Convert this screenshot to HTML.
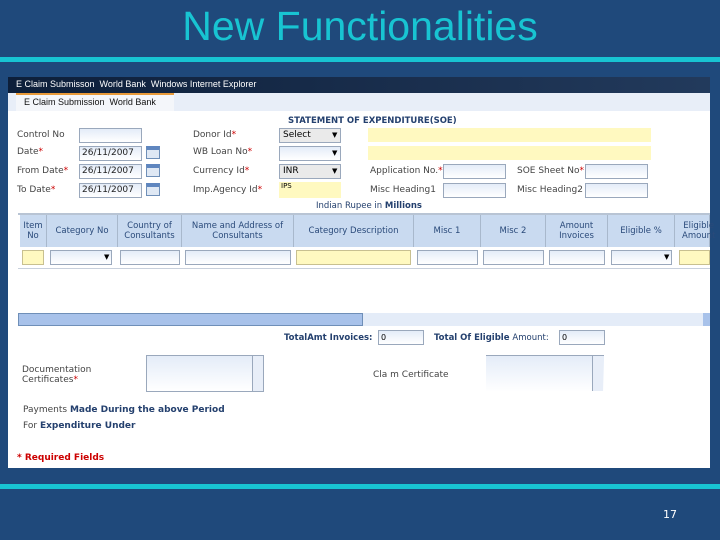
<html><head><style>
*{margin:0;padding:0;box-sizing:border-box}
body{width:720px;height:540px;background:#1f497b;position:relative;overflow:hidden;font-family:"DejaVu Sans","Liberation Sans",sans-serif}
.a{position:absolute}
.t{font-size:9px;color:#444}
.in{position:absolute;background:linear-gradient(#e4ecf8,#fff);border:1px solid #9aa8bc;height:15px;line-height:13px}
.y{background:#fff9c0;border:1px solid #c8c090}
.b{font-weight:bold;color:#24406e}
.r{color:#c00}
.h{position:absolute;top:215px;height:32px;background:#c9daf0;border-right:1px solid #a8b8cc;font-size:8.5px;color:#2a4a7a;text-align:center;display:flex;align-items:center;justify-content:center;line-height:10px}
.cal{position:absolute;width:14px;height:13px;background:#dfe8f4;border:1px solid #6f8fb8;border-top:4px solid #5f86bf}
.dd{position:absolute;font-size:7px;color:#000}
</style></head><body>
<div class="a" style="left:0;top:3px;width:720px;text-align:center;font-family:'Liberation Sans',sans-serif;font-size:41px;color:#18c4d2">New Functionalities</div>
<div class="a" style="left:0;top:57px;width:720px;height:5px;background:#18c4d2"></div>
<div class="a" style="left:0;top:484px;width:720px;height:5px;background:#18c4d2"></div>
<div class="a" style="left:663px;top:508px;font-size:11px;color:#fff">17</div>

<div class="a" style="left:8px;top:77px;width:702px;height:391px;background:#fff"></div>
<div class="a" style="left:8px;top:77px;width:702px;height:16px;background:linear-gradient(90deg,#0d1f3a,#1a2f4e 60%,#223a5c);color:#fff;font-size:9px;padding:2px 8px;font-family:'Liberation Sans',sans-serif">E Claim Submisson &nbsp;World Bank &nbsp;Windows Internet Explorer</div>
<div class="a" style="left:8px;top:93px;width:702px;height:18px;background:#e8eef8"></div>
<div class="a" style="left:16px;top:93px;width:158px;height:18px;background:#f4f6fa;border-top:2px solid #e89a3a;font-size:9px;color:#111;padding:2px 8px;font-family:'Liberation Sans',sans-serif">E Claim Submission &nbsp;World Bank</div>

<div class="a b" style="left:288px;top:116px;font-size:8.5px">STATEMENT OF EXPENDITURE(SOE)</div>
<div class="a t" style="left:17px;top:130px">Control No</div>
<div class="a t" style="left:17px;top:147px">Date<span class="r">*</span></div>
<div class="a t" style="left:17px;top:166px">From Date<span class="r">*</span></div>
<div class="a t" style="left:17px;top:185px">To Date<span class="r">*</span></div>
<div class="in" style="left:79px;top:128px;width:63px"></div>
<div class="in" style="left:79px;top:146px;width:63px;font-size:9px;color:#222;padding-left:2px">26/11/2007</div>
<div class="in" style="left:79px;top:164px;width:63px;font-size:9px;color:#222;padding-left:2px">26/11/2007</div>
<div class="in" style="left:79px;top:183px;width:63px;font-size:9px;color:#222;padding-left:2px">26/11/2007</div>
<div class="cal" style="left:146px;top:146px"></div><div class="cal" style="left:146px;top:164px"></div><div class="cal" style="left:146px;top:183px"></div>
<div class="a t" style="left:193px;top:130px">Donor Id<span class="r">*</span></div>
<div class="a t" style="left:193px;top:147px">WB Loan No<span class="r">*</span></div>
<div class="a t" style="left:193px;top:166px">Currency Id<span class="r">*</span></div>
<div class="a t" style="left:193px;top:185px">Imp.Agency Id<span class="r">*</span></div>
<div class="in" style="left:279px;top:128px;width:62px;background:#eaeaea;font-size:9px;padding-left:3px">Select</div><div class="dd" style="left:332px;top:131px">▼</div>
<div class="in" style="left:279px;top:146px;width:62px"></div><div class="dd" style="left:332px;top:149px">▼</div>
<div class="in" style="left:279px;top:164px;width:62px;background:#eaeaea;font-size:9px;padding-left:3px">INR</div><div class="dd" style="left:332px;top:167px">▼</div>
<div class="a y" style="left:279px;top:182px;width:62px;height:16px;border:none;font-size:7px;padding-left:2px">IPS</div>
<div class="a" style="left:368px;top:128px;width:283px;height:14px;background:#fff9c0"></div>
<div class="a" style="left:368px;top:146px;width:283px;height:14px;background:#fff9c0"></div>
<div class="a t" style="left:370px;top:166px">Application No.<span class="r">*</span></div>
<div class="a t" style="left:370px;top:185px">Misc Heading1</div>
<div class="in" style="left:443px;top:164px;width:63px"></div>
<div class="in" style="left:443px;top:183px;width:63px"></div>
<div class="a t" style="left:517px;top:166px">SOE Sheet No<span class="r">*</span></div>
<div class="a t" style="left:517px;top:185px">Misc Heading2</div>
<div class="in" style="left:585px;top:164px;width:63px"></div>
<div class="in" style="left:585px;top:183px;width:63px"></div>
<div class="a b" style="left:316px;top:201px;font-size:8.5px;font-weight:normal">Indian Rupee in <b>Millions</b></div>

<div class="a" style="left:18px;top:213px;width:692px;height:2px;background:#b8c4d4"></div>
<div class="h" style="left:20px;width:27px">Item<br>No</div>
<div class="h" style="left:47px;width:71px">Category No</div>
<div class="h" style="left:118px;width:64px">Country of<br>Consultants</div>
<div class="h" style="left:182px;width:112px">Name and Address of<br>Consultants</div>
<div class="h" style="left:294px;width:120px">Category Description</div>
<div class="h" style="left:414px;width:67px">Misc 1</div>
<div class="h" style="left:481px;width:65px">Misc 2</div>
<div class="h" style="left:546px;width:62px">Amount<br>Invoices</div>
<div class="h" style="left:608px;width:67px">Eligible %</div>
<div class="h" style="left:675px;width:35px;justify-content:flex-start;padding-left:7px">Eligible<br>Amount</div>
<div class="in y" style="left:22px;top:250px;width:22px"></div>
<div class="in" style="left:50px;top:250px;width:62px"></div><div class="dd" style="left:104px;top:253px">▼</div>
<div class="in" style="left:120px;top:250px;width:60px"></div>
<div class="in" style="left:185px;top:250px;width:106px"></div>
<div class="in y" style="left:296px;top:250px;width:115px"></div>
<div class="in" style="left:417px;top:250px;width:61px"></div>
<div class="in" style="left:483px;top:250px;width:61px"></div>
<div class="in" style="left:549px;top:250px;width:56px"></div>
<div class="in" style="left:611px;top:250px;width:61px"></div><div class="dd" style="left:664px;top:253px">▼</div>
<div class="in y" style="left:679px;top:250px;width:31px"></div>
<div class="a" style="left:18px;top:268px;width:692px;height:1px;background:#c8d0dc"></div>

<div class="a" style="left:18px;top:313px;width:692px;height:13px;background:#e4ecf8"></div>
<div class="a" style="left:18px;top:313px;width:345px;height:13px;background:#a8c2ea;border:1px solid #6f8fb8"></div>
<div class="a" style="left:703px;top:313px;width:7px;height:13px;background:#a8c2ea"></div>

<div class="a b" style="left:284px;top:333px;font-size:8.5px">TotalAmt Invoices:</div>
<div class="in" style="left:378px;top:330px;width:46px;font-size:8px;padding-left:2px">0</div>
<div class="a b" style="left:434px;top:333px;font-size:8.5px">Total Of Eligible <span style="font-weight:normal">Amount:</span></div>
<div class="in" style="left:559px;top:330px;width:46px;font-size:8px;padding-left:2px">0</div>
<div class="a t" style="left:22px;top:365px;line-height:10px">Documentation<br>Certificates<span class="r">*</span></div>
<div class="in" style="left:146px;top:355px;width:118px;height:37px"></div>
<div class="a" style="left:252px;top:356px;width:11px;height:35px;background:#e8eef8;border-left:1px solid #9aa8bc"></div>
<div class="a t" style="left:373px;top:370px">Cla m Certificate</div>
<div class="in" style="left:486px;top:355px;width:118px;height:37px;border:none;border-top:1px solid #9aa8bc"></div>
<div class="a" style="left:592px;top:356px;width:11px;height:35px;background:#e8eef8;border-left:1px solid #9aa8bc"></div>
<div class="a t" style="left:23px;top:405px">Payments <b style="color:#24406e">Made During the above Period</b></div>
<div class="a t" style="left:23px;top:421px">For <b style="color:#24406e">Expenditure Under</b></div>
<div class="a" style="left:17px;top:453px;font-size:9px;color:#c00;font-weight:bold">* Required Fields</div>
</body></html>
